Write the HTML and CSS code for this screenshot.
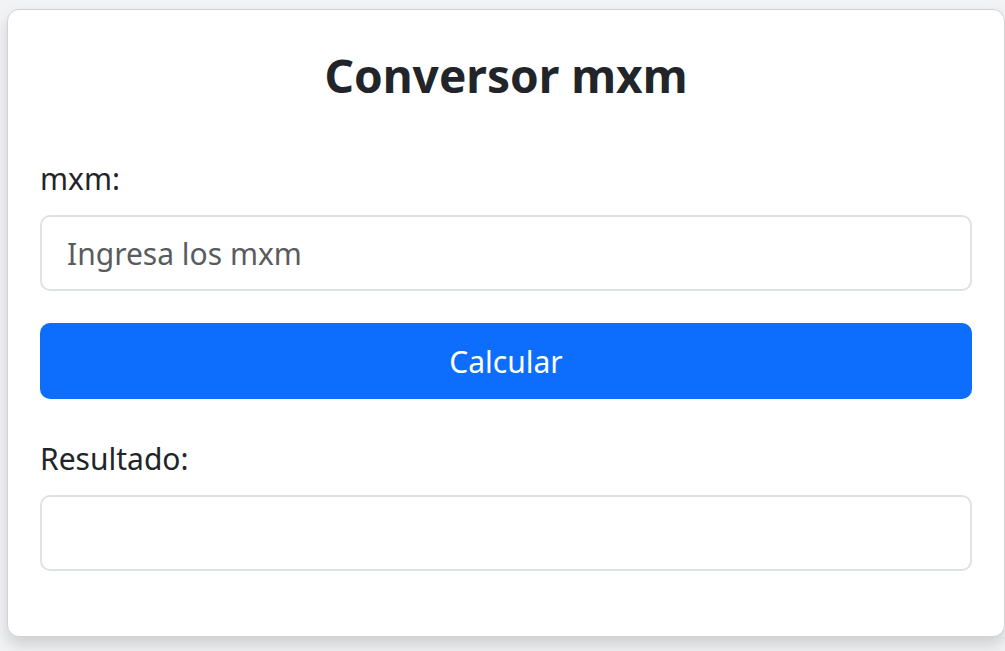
FILE: index.html
```html
<!DOCTYPE html>
<html lang="es">
<head>
<meta charset="utf-8">
<title>Conversor mxm</title>
<link rel="stylesheet" href="styles.css">
</head>
<body>
<div class="page">
  <div class="card">
    <h1 class="title">Conversor mxm</h1>
    <label class="label" for="mxm">mxm:</label>
    <input class="field" id="mxm" type="text" placeholder="Ingresa los mxm">
    <button class="btn" type="button">Calcular</button>
    <label class="label" for="res">Resultado:</label>
    <input class="field" id="res" type="text" readonly>
  </div>
</div>
</body>
</html>
```

FILE: styles.css
```css
* { box-sizing: border-box; }
html, body { margin: 0; padding: 0; }
body {
  background: #f2f3f5;
  font-family: "Noto Sans", "Open Sans", sans-serif;
  color: #212529;
  width: 1005px;
  height: 651px;
  overflow: hidden;
}
.page {
  padding: 9px 0 0 7px;
}
.card {
  width: 998px;
  height: 628px;
  background: #fff;
  border: 1px solid #d2d2d2;
  border-radius: 12px;
  box-shadow: 0 8px 16px rgba(0,0,0,0.15);
  padding: 35px 32px 0 32px;
  display: flex;
  flex-direction: column;
}
.title {
  margin: 0 0 51px 0;
  font-size: 46px;
  line-height: 60px;
  font-weight: 700;
  text-align: center;
  color: #212529;
}
.label {
  font-size: 30px;
  line-height: 45px;
  margin-bottom: 14px;
  color: #212529;
}
.field {
  width: 932px;
  height: 76px;
  border: 2px solid #dee2e6;
  border-radius: 10px;
  padding: 0 25px;
  font-family: inherit;
  font-size: 30px;
  color: #212529;
  background: #fff;
  outline: none;
}
.field::placeholder { color: #595c5f; }
.btn {
  margin-top: 32px;
  margin-bottom: 37px;
  width: 932px;
  height: 76px;
  border: none;
  border-radius: 10px;
  background: #0d6efd;
  color: #fff;
  font-family: inherit;
  font-size: 30px;
}
```
